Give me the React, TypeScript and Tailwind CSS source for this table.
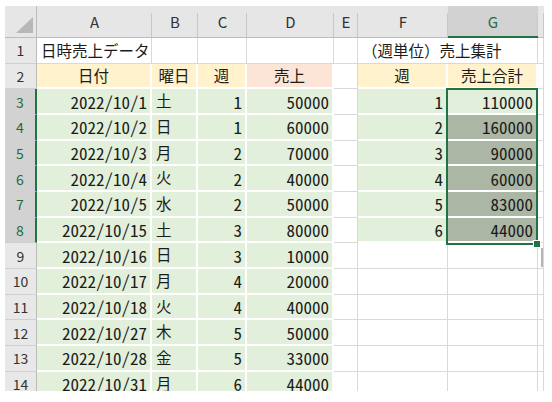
import React from "react";

type Fill = "none" | "yellow" | "salmon" | "green" | "sel";

const fillClass: Record<Fill, string> = {
  none: "bg-white border-r border-b border-[#d9d9d9]",
  yellow: "bg-[#fff2cc] border-r-2 border-b-2 border-white",
  salmon: "bg-[#fce4d6] border-r-2 border-b-2 border-white",
  green: "bg-[#e2efda] border-r-2 border-b-2 border-white",
  sel: "bg-[#abb6a5] border-r-2 border-b-2 border-white",
};

const alignClass = {
  left: "justify-start pl-[4px]",
  right: "justify-end pr-[3px]",
  center: "justify-center",
};

function Cell({
  fill = "none",
  align = "left",
  num = false,
  span2 = false,
  children,
}: {
  fill?: Fill;
  align?: "left" | "right" | "center";
  num?: boolean;
  span2?: boolean;
  children?: React.ReactNode;
}) {
  return (
    <div
      className={`flex items-center overflow-visible whitespace-nowrap text-[#1b1b1b] ${
        num ? "text-[17px] [font-feature-settings:'hwid']" : "text-[15.5px]"
      } ${fillClass[fill]} ${alignClass[align]} ${span2 ? "col-span-2" : ""}`}
    >
      {children}
    </div>
  );
}

function ColHead({ label, selected = false }: { label: string; selected?: boolean }) {
  return (
    <div
      className={`relative flex items-center justify-center text-[15px] ${
        selected
          ? "bg-[#d2d2d2] text-[#1e6b41] border-b-2 border-[#217346]"
          : "bg-[#e6e6e6] text-[#333] border-b border-[#bcbcbc]"
      }`}
    >
      {label}
      <div className="absolute right-0 top-[7px] bottom-0 w-px bg-[#c8c8c8]" />
    </div>
  );
}

function RowHead({ n, selected = false }: { n: number; selected?: boolean }) {
  return (
    <div
      className={`flex items-center justify-center text-[14px] border-b border-[#d0d0d0] ${
        selected
          ? "bg-[#d2d2d2] text-[#1e6b41] border-r-2 border-r-[#217346]"
          : "bg-[#e8e8e8] text-[#333] border-r border-r-[#bcbcbc]"
      }`}
    >
      {n}
    </div>
  );
}

const data: [string, string, number, number][] = [
  ["2022/10/1", "土", 1, 50000],
  ["2022/10/2", "日", 1, 60000],
  ["2022/10/3", "月", 2, 70000],
  ["2022/10/4", "火", 2, 40000],
  ["2022/10/5", "水", 2, 50000],
  ["2022/10/15", "土", 3, 80000],
  ["2022/10/16", "日", 3, 10000],
  ["2022/10/17", "月", 4, 20000],
  ["2022/10/18", "火", 4, 40000],
  ["2022/10/27", "木", 5, 50000],
  ["2022/10/28", "金", 5, 33000],
  ["2022/10/31", "月", 6, 44000],
];

const summary: [number, number][] = [
  [1, 110000],
  [2, 160000],
  [3, 90000],
  [4, 60000],
  [5, 83000],
  [6, 44000],
];

export default function App() {
  return (
    <div
      className="w-[552px] h-[402px] bg-white pt-[6px] pl-[5px] overflow-hidden"
      style={{ fontFamily: "'Noto Sans CJK JP', 'Noto Sans', sans-serif" }}
    >
      <div className="relative h-[385px] w-[539px] overflow-hidden">
        <div className="grid grid-cols-[32px_115px_46px_49px_87px_24px_90px_90px_6px] grid-rows-[32px_repeat(14,25.67px)] leading-none">
          {/* header row */}
          <div className="relative bg-[#e6e6e6] border-r border-b border-[#bcbcbc]">
            <svg className="absolute left-0 top-0" width="32" height="32" viewBox="0 0 32 32">
              <polygon points="11,27 28,27 28,11" fill="#b7b7b7" />
            </svg>
          </div>
          <ColHead label="A" />
          <ColHead label="B" />
          <ColHead label="C" />
          <ColHead label="D" />
          <ColHead label="E" />
          <ColHead label="F" />
          <ColHead label="G" selected />
          <ColHead label="" />

          {/* row 1 */}
          <RowHead n={1} />
          <Cell>日時売上データ</Cell>
          <Cell />
          <Cell />
          <Cell />
          <Cell />
          <Cell span2>（週単位）売上集計</Cell>
          <Cell />

          {/* row 2 */}
          <RowHead n={2} />
          <Cell fill="yellow" align="center">日付</Cell>
          <Cell fill="yellow" align="center">曜日</Cell>
          <Cell fill="yellow" align="center">週</Cell>
          <Cell fill="salmon" align="center">売上</Cell>
          <Cell />
          <Cell fill="yellow" align="center">週</Cell>
          <Cell fill="yellow" align="center">売上合計</Cell>
          <Cell />

          {data.map((d, i) => {
            const s = summary[i];
            return (
              <React.Fragment key={i}>
                <RowHead n={i + 3} selected={i < 6} />
                <Cell fill="green" align="right" num>
                  {d[0]}
                </Cell>
                <Cell fill="green" align="left">
                  {d[1]}
                </Cell>
                <Cell fill="green" align="right" num>
                  {d[2]}
                </Cell>
                <Cell fill="green" align="right" num>
                  {d[3]}
                </Cell>
                <Cell />
                {s ? (
                  <Cell fill="green" align="right" num>
                    {s[0]}
                  </Cell>
                ) : (
                  <Cell />
                )}
                {s ? (
                  <Cell fill={i === 0 ? "green" : "sel"} align="right" num>
                    {s[1]}
                  </Cell>
                ) : (
                  <Cell />
                )}
                <Cell />
              </React.Fragment>
            );
          })}
        </div>

        {/* selection border */}
        <div className="absolute left-[441px] top-[82px] w-[92px] h-[157px] border-2 border-[#217346]" />
        {/* fill handle */}
        <div className="absolute left-[528px] top-[234px] w-[8px] h-[8px] bg-[#217346] border border-white" />
        {/* quick analysis hint */}
        <div className="absolute left-[536px] top-[242px] w-[2px] h-[19px] bg-[#b5b5b5]" />
      </div>
    </div>
  );
}
